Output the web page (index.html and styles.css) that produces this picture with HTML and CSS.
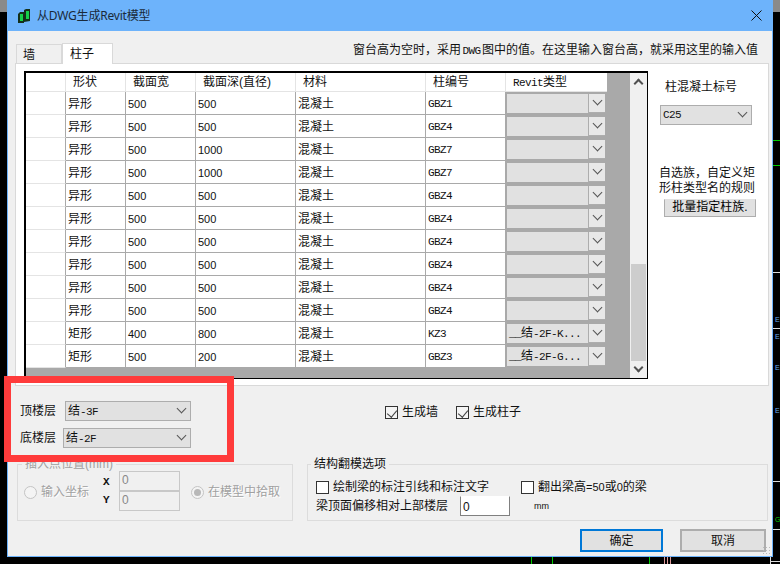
FILE: index.html
```html
<!DOCTYPE html>
<html lang="zh-CN">
<head>
    <meta charset="UTF-8">
    <title>从DWG生成Revit模型</title>
    <link rel="stylesheet" href="styles.css">
</head>

<body>
    <!-- CAD drawing behind the dialog -->
    <div class="cad">
        <i class="edge-top"></i>
        <i class="ln green" style="left:773px;top:140px;width:7px;height:1px"></i>
        <i class="ln green" style="left:773px;top:165px;width:7px;height:1px"></i>
        <i class="ln white" style="left:773px;top:272px;width:7px;height:1px"></i>
        <i class="ln white" style="left:773px;top:328px;width:7px;height:1px"></i>
        <i class="ln white" style="left:773px;top:481px;width:7px;height:1px"></i>
        <i class="ln white" style="left:773px;top:529px;width:7px;height:1px"></i>
        <i class="ln white" style="left:770px;top:557px;width:1px;height:7px"></i>
        <i class="ln white" style="left:770px;top:561px;width:10px;height:1px"></i>
        <i class="ln green" style="left:531px;top:557px;width:1px;height:7px"></i>
        <i class="ln green" style="left:552px;top:557px;width:1px;height:7px"></i>
        <i class="ln green" style="left:649px;top:557px;width:1px;height:7px"></i>
        <i class="ln pink" style="left:664px;top:557px;width:1px;height:7px"></i>
        <i class="ln pink" style="left:667px;top:557px;width:1px;height:7px"></i>
        <i class="ln pink" style="left:670px;top:557px;width:1px;height:7px"></i>
        <b class="mark blue" style="top:313px">E</b>
        <b class="mark blue" style="top:330px">E</b>
        <b class="mark blue" style="top:361px">E</b>
        <b class="mark blue" style="top:404px">E</b>
        <b class="mark lime" style="top:513px">G</b>
    </div>

    <div class="window">
        <header class="title">
            <svg class="title-icon" width="12" height="14" viewBox="0 0 12 14">
                <path d="M0 5 L2 3 L6 3 L6 14 L0 14 Z" fill="#14301a"/>
                <path d="M6 1 L8 0 L12 0 L12 12 L6 13 Z" fill="#14301a"/>
                <path d="M2 5 H5 V12 H2 Z" fill="#16d24a"/>
                <path d="M8 2 H11 V10 H8 Z" fill="#16d24a"/>
            </svg>
            <span class="title-text">从DWG生成Revit模型</span>
            <svg class="close" width="11" height="11" viewBox="0 0 11 11">
                <path d="M0.5 0.5 L10.5 10.5 M10.5 0.5 L0.5 10.5" stroke="#111" stroke-width="1" fill="none"/>
            </svg>
        </header>

        <div class="tabbar">
            <div class="tab">墙</div>
            <div class="tab active">柱子</div>
            <p class="notice">窗台高为空时，采用<span class="mono dwg">DWG</span>图中的值。在这里输入窗台高，就采用这里的输入值</p>
        </div>

        <section class="panel">
            <div class="grid">
                <table>
                    <thead>
                        <tr><th></th><th>形状</th><th>截面宽</th><th>截面深(直径)</th><th>材料</th><th>柱编号</th><th><span class="mono">Revit</span>类型</th></tr>
                    </thead>
                    <tbody>
                        <tr><td></td><td>异形</td><td class="n">500</td><td class="n">500</td><td>混凝土</td><td class="code">GBZ1</td><td class="ct"><div class="combo"><span></span><i class="arrow"></i></div></td></tr>
                        <tr><td></td><td>异形</td><td class="n">500</td><td class="n">500</td><td>混凝土</td><td class="code">GBZ4</td><td class="ct"><div class="combo"><span></span><i class="arrow"></i></div></td></tr>
                        <tr><td></td><td>异形</td><td class="n">500</td><td class="n">1000</td><td>混凝土</td><td class="code">GBZ7</td><td class="ct"><div class="combo"><span></span><i class="arrow"></i></div></td></tr>
                        <tr><td></td><td>异形</td><td class="n">500</td><td class="n">1000</td><td>混凝土</td><td class="code">GBZ7</td><td class="ct"><div class="combo"><span></span><i class="arrow"></i></div></td></tr>
                        <tr><td></td><td>异形</td><td class="n">500</td><td class="n">500</td><td>混凝土</td><td class="code">GBZ4</td><td class="ct"><div class="combo"><span></span><i class="arrow"></i></div></td></tr>
                        <tr><td></td><td>异形</td><td class="n">500</td><td class="n">500</td><td>混凝土</td><td class="code">GBZ4</td><td class="ct"><div class="combo"><span></span><i class="arrow"></i></div></td></tr>
                        <tr><td></td><td>异形</td><td class="n">500</td><td class="n">500</td><td>混凝土</td><td class="code">GBZ4</td><td class="ct"><div class="combo"><span></span><i class="arrow"></i></div></td></tr>
                        <tr><td></td><td>异形</td><td class="n">500</td><td class="n">500</td><td>混凝土</td><td class="code">GBZ4</td><td class="ct"><div class="combo"><span></span><i class="arrow"></i></div></td></tr>
                        <tr><td></td><td>异形</td><td class="n">500</td><td class="n">500</td><td>混凝土</td><td class="code">GBZ4</td><td class="ct"><div class="combo"><span></span><i class="arrow"></i></div></td></tr>
                        <tr><td></td><td>异形</td><td class="n">500</td><td class="n">500</td><td>混凝土</td><td class="code">GBZ4</td><td class="ct"><div class="combo"><span></span><i class="arrow"></i></div></td></tr>
                        <tr><td></td><td>矩形</td><td class="n">400</td><td class="n">800</td><td>混凝土</td><td class="code">KZ3</td><td class="ct"><div class="combo"><span><span class="mono">__</span>结<span class="mono">-2F-K...</span></span><i class="arrow"></i></div></td></tr>
                        <tr><td></td><td>矩形</td><td class="n">500</td><td class="n">200</td><td>混凝土</td><td class="code">GBZ3</td><td class="ct"><div class="combo"><span><span class="mono">__</span>结<span class="mono">-2F-G...</span></span><i class="arrow"></i></div></td></tr>
                    </tbody>
                </table>
                <div class="gutter"></div>
                <div class="scrollbar">
                    <div class="sb-btn"><i class="chev up"></i></div>
                    <div class="sb-space"></div>
                    <div class="sb-thumb"></div>
                    <div class="sb-btn"><i class="chev down"></i></div>
                </div>
            </div>

            <aside class="side">
                <label class="side-label">柱混凝土标号</label>
                <div class="select side-select"><span class="mono">C25</span><i class="sel-arrow"></i></div>
                <p class="side-note">自选族，自定义矩<br>形柱类型名的规则</p>
                <button class="batch">批量指定柱族.</button>
            </aside>
        </section>

        <section class="floors-row">
            <div class="floors">
                <div class="floor first">
                    <span class="floor-label">顶楼层</span>
                    <div class="select floor-select"><span>结<span class="mono">-3F</span></span><i class="sel-arrow"></i></div>
                </div>
                <div class="floor">
                    <span class="floor-label">底楼层</span>
                    <div class="select floor-select"><span>结<span class="mono">-2F</span></span><i class="sel-arrow"></i></div>
                </div>
            </div>
            <div class="gen">
                <label class="check"><i class="box ticked"></i>生成墙</label>
                <label class="check"><i class="box ticked"></i>生成柱子</label>
            </div>
        </section>

        <section class="groups">
            <fieldset class="group insert">
                <legend>插入点位置(mm)</legend>
                <label class="radio"><i class="dot"></i>输入坐标</label>
                <div class="xy">
                    <div class="xy-row"><span class="mono strong">X</span><span class="field">0</span></div>
                    <div class="xy-row"><span class="mono strong">Y</span><span class="field">0</span></div>
                </div>
                <label class="radio"><i class="dot on"></i>在模型中拾取</label>
            </fieldset>
            <fieldset class="group struct">
                <legend>结构翻模选项</legend>
                <div class="struct-top">
                    <label class="check draw"><i class="box"></i>绘制梁的标注引线和标注文字</label>
                    <label class="check"><i class="box"></i>翻出梁高<span class="n">=50</span>或<span class="n">0</span>的梁</label>
                </div>
                <div class="struct-bottom">
                    <span>梁顶面偏移相对上部楼层</span>
                    <span class="offset">0</span>
                    <span class="mm">mm</span>
                </div>
            </fieldset>
        </section>

        <footer class="actions">
            <button class="btn primary">确定</button>
            <button class="btn">取消</button>
        </footer>
        <div class="grip"></div>
    </div>

    <!-- red box somebody drew on the screenshot -->
    <div class="highlight"></div>
</body>
</html>
```

FILE: styles.css
```css
* {
    box-sizing: border-box;
}

html, body {
    margin: 0;
    padding: 0;
}

body {
    position: relative;
    width: 780px;
    height: 564px;
    overflow: hidden;
    background-color: #000;
    color: #111;
    font-family: "Liberation Sans", "Noto Sans CJK SC", sans-serif;
    font-size: 12px;
    line-height: 14px;
}

/* background drawing */
.cad i, .cad b {
    position: absolute;
    display: block;
}

.edge-top {
    left: 0;
    top: 0;
    width: 780px;
    height: 12px;
    background-color: #8a8a8a;
}

.green { background-color: #0c0; }
.white { background-color: #ddd; }
.pink { background-color: #d99; }

.mark {
    left: 775px;
    font-weight: normal;
    font-size: 7px;
}

.blue { color: #6ab0f0; }
.lime { color: #0c0; }

/* window */
.window {
    position: absolute;
    left: 7px;
    top: 0;
    width: 766px;
    height: 557px;
    background-color: #f0f0f0;
    border: 1px solid #6db3fb;
    border-top: 0;
}

.title {
    display: flex;
    align-items: center;
    height: 31px;
    margin: 0 -1px;
    padding: 0 11px 0 11px;
    background-color: #6db3fb;
}

.title-icon {
    margin-right: 7px;
}

.title-text {
    flex: 1;
    font-family: "Noto Sans", "Noto Sans CJK SC", sans-serif;
    font-size: 12px;
    letter-spacing: -0.2px;
    color: #1a2a3a;
}

/* latin text of the dialog font: 6px a letter */
.mono {
    font-family: "Liberation Mono", "Noto Sans CJK SC", monospace;
    font-size: 11px;
    letter-spacing: -0.6px;
}

.dwg {
    padding: 0 1.5px;
}

.strong {
    font-weight: bold;
}

/* tabs */
.tabbar {
    display: flex;
    align-items: flex-end;
    height: 32px;
    padding-left: 8px;
}

.tab {
    width: 46px;
    height: 19px;
    padding-left: 6px;
    padding-top: 3px;
    background-color: #f0f0f0;
    border: 1px solid #d9d9d9;
    border-bottom: 0;
}

.tab.active {
    width: 51px;
    height: 21px;
    margin-bottom: -1px;
    padding-top: 3px;
    padding-left: 7px;
    background-color: #fff;
    position: relative;
    z-index: 1;
}

.notice {
    margin: 0 0 5px auto;
    padding-right: 14px;
    white-space: nowrap;
}

.panel {
    display: flex;
    width: 754px;
    height: 323px;
    margin-left: 7px;
    padding: 7px 0 0 8px;
    background-color: #fff;
    border: 1px solid #d9d9d9;
}

/* data grid */
.grid {
    display: flex;
    flex: none;
    width: 624px;
    height: 308px;
    background-color: #a9a9a9;
    border-style: solid;
    border-color: #000;
    border-width: 2px 1px 1px 2px;
}

table {
    flex: none;
    width: 581px;
    height: 295px;
    table-layout: fixed;
    border-collapse: separate;
    border-spacing: 0;
}

th, td {
    padding: 0 0 0 2px;
    overflow: hidden;
    white-space: nowrap;
    background-color: #fff;
    border-right: 1px solid #a9a9a9;
    border-bottom: 1px solid #a9a9a9;
    font-weight: normal;
    text-align: left;
}

th {
    height: 19px;
    padding-left: 7px;
    border-right-color: #e4e4e4;
    border-bottom-color: #e4e4e4;
}

td {
    height: 23px;
    padding-top: 2px;
}

th:nth-child(1), td:nth-child(1) { width: 40px; border-bottom-color: #e4e4e4; }
th:nth-child(2) { width: 60px; }
th:nth-child(3) { width: 70px; }
th:nth-child(4) { width: 100px; }
th:nth-child(5) { width: 130px; }
th:nth-child(6) { width: 80px; }
th:nth-child(7) { width: 101px; border-right: 0; }

.n {
    font-size: 11px;
}

.code {
    font-family: "Liberation Mono", monospace;
    font-size: 11px;
    letter-spacing: -0.6px;
}

.ct {
    padding: 0;
    background-color: #a9a9a9;
    border: 0;
}

.combo {
    display: flex;
    height: 23px;
    border: 2px solid #a9a9a9;
    border-left-width: 1px;
    background-color: #e1e1e1;
    line-height: 18px;
}

.combo > span {
    flex: 1;
    padding-left: 2px;
    overflow: hidden;
}

.arrow {
    position: relative;
    display: block;
    width: 17px;
    background-color: #e8e8e8;
    border-left: 1px solid #adadad;
    border-bottom: 1px solid #adadad;
}

.arrow::after, .sel-arrow::after {
    content: "";
    position: absolute;
    left: 5px;
    top: 3px;
    width: 6px;
    height: 6px;
    border-right: 1px solid #555;
    border-bottom: 1px solid #555;
    transform: rotate(45deg);
}

.gutter {
    flex: none;
    width: 23px;
}

.scrollbar {
    display: flex;
    flex: none;
    flex-direction: column;
    width: 17px;
    background-color: #f0f0f0;
}

.sb-btn {
    flex: none;
    height: 17px;
    position: relative;
}

.sb-space {
    flex: none;
    height: 174px;
}

.sb-thumb {
    flex: none;
    height: 97px;
    margin: 0 1px;
    background-color: #cdcdcd;
}

.chev {
    position: absolute;
    left: 5px;
    width: 7px;
    height: 7px;
    border-color: #505050;
    border-style: solid;
    border-width: 2px 0 0 2px;
}

.chev.up {
    top: 7px;
    transform: rotate(45deg);
}

.chev.down {
    top: 3px;
    transform: rotate(225deg);
}

/* right side of the panel */
.side {
    display: flex;
    flex-direction: column;
    padding-left: 12px;
}

.side-label {
    margin: 9px 0 0 5px;
}

.select {
    position: relative;
    display: flex;
    align-items: center;
    height: 20px;
    padding-left: 2px;
    background-color: #e1e1e1;
    border: 1px solid #adadad;
}

.sel-arrow {
    position: absolute;
    right: 0;
    top: 0;
    width: 17px;
    height: 18px;
}

.side-select {
    width: 92px;
    margin-top: 11px;
}

.side-note {
    margin: 41px 0 0 -1px;
    line-height: 15px;
    white-space: nowrap;
}

.batch {
    width: 92px;
    height: 18px;
    margin: 3px 0 0 4px;
    padding: 0 0 3px;
    background-color: #e1e1e1;
    border: 1px solid #adadad;
    border-top-color: #e1e1e1;
    font: inherit;
    line-height: 12px;
    white-space: nowrap;
    overflow: hidden;
}

/* floors and generate options */
.floors-row {
    display: flex;
    height: 71px;
    padding: 15px 0 0 12px;
}

.floor {
    display: flex;
    align-items: center;
    height: 20px;
    margin-bottom: 7px;
}

.floor-label {
    width: 36px;
}

.floor-select {
    width: 128px;
    margin-left: 7px;
}

.floor.first .floor-select {
    width: 126px;
    margin-left: 9px;
}

.gen {
    display: flex;
    gap: 18px;
    margin-left: 194px;
    padding-top: 4px;
}

.check {
    display: flex;
    align-items: center;
    height: 14px;
    white-space: nowrap;
}

.box {
    position: relative;
    display: block;
    flex: none;
    width: 13px;
    height: 13px;
    margin-right: 4px;
    background-color: #fff;
    border: 1px solid #333;
}

.box.ticked {
    background-color: #f4f4f4;
}

.box.ticked::after {
    content: "";
    position: absolute;
    left: 3px;
    top: 1px;
    width: 5px;
    height: 8px;
    border-right: 1px solid #444;
    border-bottom: 1px solid #444;
    transform: rotate(40deg);
}

/* group boxes */
.groups {
    display: flex;
    gap: 14px;
    padding-left: 9px;
}

.group {
    height: 64px;
    margin: 0;
    padding: 0;
    border: 1px solid #dcdcdc;
}

.group legend {
    padding: 0 3px;
    line-height: 14px;
}

.insert {
    display: flex;
    align-items: center;
    width: 276px;
    padding: 0 0 7px 6px;
    color: #a0a0a0;
}

.insert legend {
    margin-left: -2px;
    color: #a0a0a0;
}

.radio {
    display: flex;
    align-items: center;
    white-space: nowrap;
    text-shadow: 1px 1px 0 #fff;
}

.dot {
    position: relative;
    display: block;
    width: 13px;
    height: 13px;
    margin-right: 4px;
    background-color: #f4f4f4;
    border: 1px solid #c4c4c4;
    border-radius: 50%;
}

.dot.on::after {
    content: "";
    position: absolute;
    left: 2px;
    top: 2px;
    width: 7px;
    height: 7px;
    background-color: #b8b8b8;
    border-radius: 50%;
}

.xy {
    align-self: flex-start;
    margin: -1px 11px 0 14px;
}

.xy-row {
    display: flex;
    align-items: center;
    height: 20px;
    color: #111;
}

.xy-row .mono {
    width: 16px;
}

.xy-row:first-child .mono {
    margin-top: 3px;
}

.field {
    width: 61px;
    height: 20px;
    margin-bottom: -1px;
    padding: 1px 0 0 2px;
    color: #888;
    background-color: #f0f0f0;
    border: 1px solid #c8c8c8;
}

.struct {
    width: 461px;
    padding: 9px 0 0 8px;
}

.struct legend {
    margin-left: -5px;
}

.struct-top {
    display: flex;
}

.draw {
    width: 205px;
}

.struct-bottom {
    display: flex;
    align-items: center;
    height: 20px;
    margin-top: 2px;
}

.offset {
    width: 50px;
    height: 20px;
    margin-left: 12px;
    padding: 3px 0 0 2px;
    background-color: #fff;
    border: 1px solid #808080;
    border-top-color: #fff;
}

.mm {
    margin-left: 24px;
    font-size: 9px;
}

/* bottom buttons */
.actions {
    display: flex;
    justify-content: flex-end;
    gap: 17px;
    padding: 8px 6px 0 0;
}

.btn {
    width: 86px;
    height: 23px;
    padding: 0;
    background-color: #e1e1e1;
    border: 2px solid #adadad;
    font: inherit;
    color: #111;
}

.btn.primary {
    width: 83px;
    border-color: #0078d7;
}

.grip {
    position: absolute;
    right: 1px;
    bottom: 1px;
    width: 9px;
    height: 9px;
    background-image: radial-gradient(#bbb 1px, transparent 1px);
    background-size: 3px 3px;
}

.highlight {
    position: absolute;
    left: 4px;
    top: 376px;
    width: 230px;
    height: 86px;
    border: 7px solid #ff3b3b;
}
```
